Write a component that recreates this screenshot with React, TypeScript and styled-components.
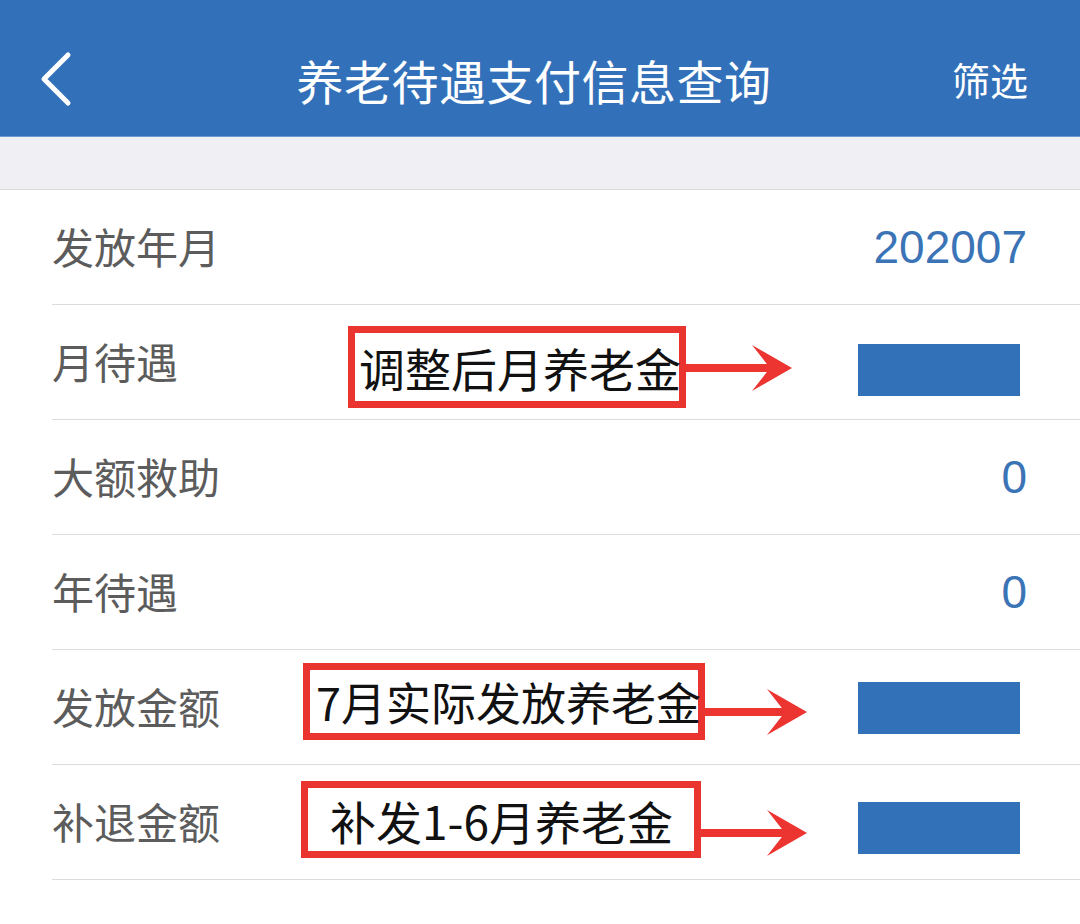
import React from "react";
import styled, { createGlobalStyle } from "styled-components";

const GlobalStyle = createGlobalStyle`
  html, body {
    margin: 0;
    padding: 0;
    background: #ffffff;
  }
  * { box-sizing: border-box; }
  #root {
    width: 1080px;
    min-height: 924px;
    background: #ffffff;
    font-family: "Liberation Sans", "Noto Sans CJK SC", sans-serif;
  }
`;

const Page = styled.div`
  width: 1080px;
  display: flex;
  flex-direction: column;
`;

const Header = styled.header`
  height: 137px;
  background: #3271b9;
  display: grid;
  grid-template-columns: 1fr auto 1fr;
  align-items: center;
  padding: 22px 52px 0 40px;
  color: #ffffff;
  border-bottom: 1px solid #6a9ad0;
`;

const BackButton = styled.div`
  display: flex;
  align-items: center;
  justify-self: start;
  height: 56px;
`;

const Title = styled.h1`
  margin: 0;
  font-family: "Noto Sans CJK SC", sans-serif;
  font-weight: 400;
  font-size: 47px;
  letter-spacing: 0.5px;
  line-height: 1;
`;

const Action = styled.div`
  justify-self: end;
  font-family: "Noto Sans CJK SC", sans-serif;
  font-size: 38px;
  line-height: 1;
`;

const Band = styled.div`
  height: 53px;
  background: #efeff4;
  border-bottom: 1px solid #dadada;
`;

const List = styled.div`
  display: flex;
  flex-direction: column;
`;

const Row = styled.div`
  position: relative;
  padding-left: 52px;
`;

const Cell = styled.div`
  height: 115px;
  display: flex;
  align-items: center;
  justify-content: space-between;
  padding-right: 53px;
  border-bottom: 1px solid #dcdcdc;
`;

const Label = styled.span`
  font-family: "Noto Sans CJK SC", sans-serif;
  font-size: 42px;
  color: #5c5c5c;
  line-height: 1;
  margin-top: -2px;
`;

const Value = styled.span`
  font-family: "Liberation Sans", sans-serif;
  font-size: 46px;
  color: #3a74b6;
  line-height: 1;
`;

const Masked = styled.div<{ $shift: number }>`
  width: 162px;
  height: 52px;
  background: #3270b8;
  margin-right: 7px;
  margin-top: ${(p) => p.$shift}px;
`;

const Annotation = styled.div<{ $left: number; $top: number }>`
  position: absolute;
  left: ${(p) => p.$left}px;
  top: ${(p) => p.$top}px;
  display: flex;
  align-items: flex-start;
`;

const NoteBox = styled.div<{ $w: number; $h: number; $pad: number; $size: number }>`
  width: ${(p) => p.$w}px;
  height: ${(p) => p.$h}px;
  border: 7px solid #e93430;
  background: #ffffff;
  display: flex;
  align-items: center;
  padding-left: ${(p) => p.$pad}px;
  white-space: nowrap;
  overflow: visible;
  font-family: "Noto Sans CJK SC", sans-serif;
  font-size: ${(p) => p.$size}px;
  color: #111111;
  line-height: 1;
`;

const ArrowWrap = styled.div<{ $y: number }>`
  margin-top: ${(p) => p.$y - 24}px;
  display: flex;
`;

const Arrow: React.FC<{ length: number; y: number }> = ({ length, y }) => (
  <ArrowWrap $y={y}>
    <svg width={length} height={48} viewBox={`0 0 ${length} 48`}>
      <rect x={0} y={20} width={length - 20} height={8} fill="#ec3430" />
      <polygon
        points={`${length},24 ${length - 40},1 ${length - 22},24 ${length - 40},47`}
        fill="#ec3430"
      />
    </svg>
  </ArrowWrap>
);

type Note = {
  text: string;
  left: number;
  top: number;
  w: number;
  h: number;
  pad: number;
  size: number;
  arrowLen: number;
  arrowY: number;
};

type Item = {
  label: string;
  value?: string;
  masked?: number;
  note?: Note;
};

const items: Item[] = [
  { label: "发放年月", value: "202007" },
  {
    label: "月待遇",
    masked: 15,
    note: { text: "调整后月养老金", left: 348, top: 21, w: 338, h: 82, pad: 4, size: 46, arrowLen: 106, arrowY: 42 },
  },
  { label: "大额救助", value: "0" },
  { label: "年待遇", value: "0" },
  {
    label: "发放金额",
    masked: 2,
    note: { text: "7月实际发放养老金", left: 303, top: 13, w: 402, h: 77, pad: 6, size: 45, arrowLen: 102, arrowY: 49 },
  },
  {
    label: "补退金额",
    masked: 12,
    note: { text: "补发1-6月养老金", left: 301, top: 16, w: 400, h: 77, pad: 22, size: 46, arrowLen: 106, arrowY: 52 },
  },
];

export default function App() {
  return (
    <>
      <GlobalStyle />
      <Page>
        <Header>
          <BackButton>
            <svg width="36" height="56" viewBox="0 0 36 56">
              <polyline
                points="28,4 4,28 28,52"
                fill="none"
                stroke="#ffffff"
                strokeWidth="5"
                strokeLinecap="round"
                strokeLinejoin="round"
              />
            </svg>
          </BackButton>
          <Title>养老待遇支付信息查询</Title>
          <Action>筛选</Action>
        </Header>
        <Band />
        <List>
          {items.map((it) => (
            <Row key={it.label}>
              <Cell>
                <Label>{it.label}</Label>
                {it.value !== undefined && <Value>{it.value}</Value>}
                {it.masked !== undefined && <Masked $shift={it.masked} />}
              </Cell>
              {it.note && (
                <Annotation $left={it.note.left} $top={it.note.top}>
                  <NoteBox $w={it.note.w} $h={it.note.h} $pad={it.note.pad} $size={it.note.size}>
                    {it.note.text}
                  </NoteBox>
                  <Arrow length={it.note.arrowLen} y={it.note.arrowY} />
                </Annotation>
              )}
            </Row>
          ))}
        </List>
      </Page>
    </>
  );
}
